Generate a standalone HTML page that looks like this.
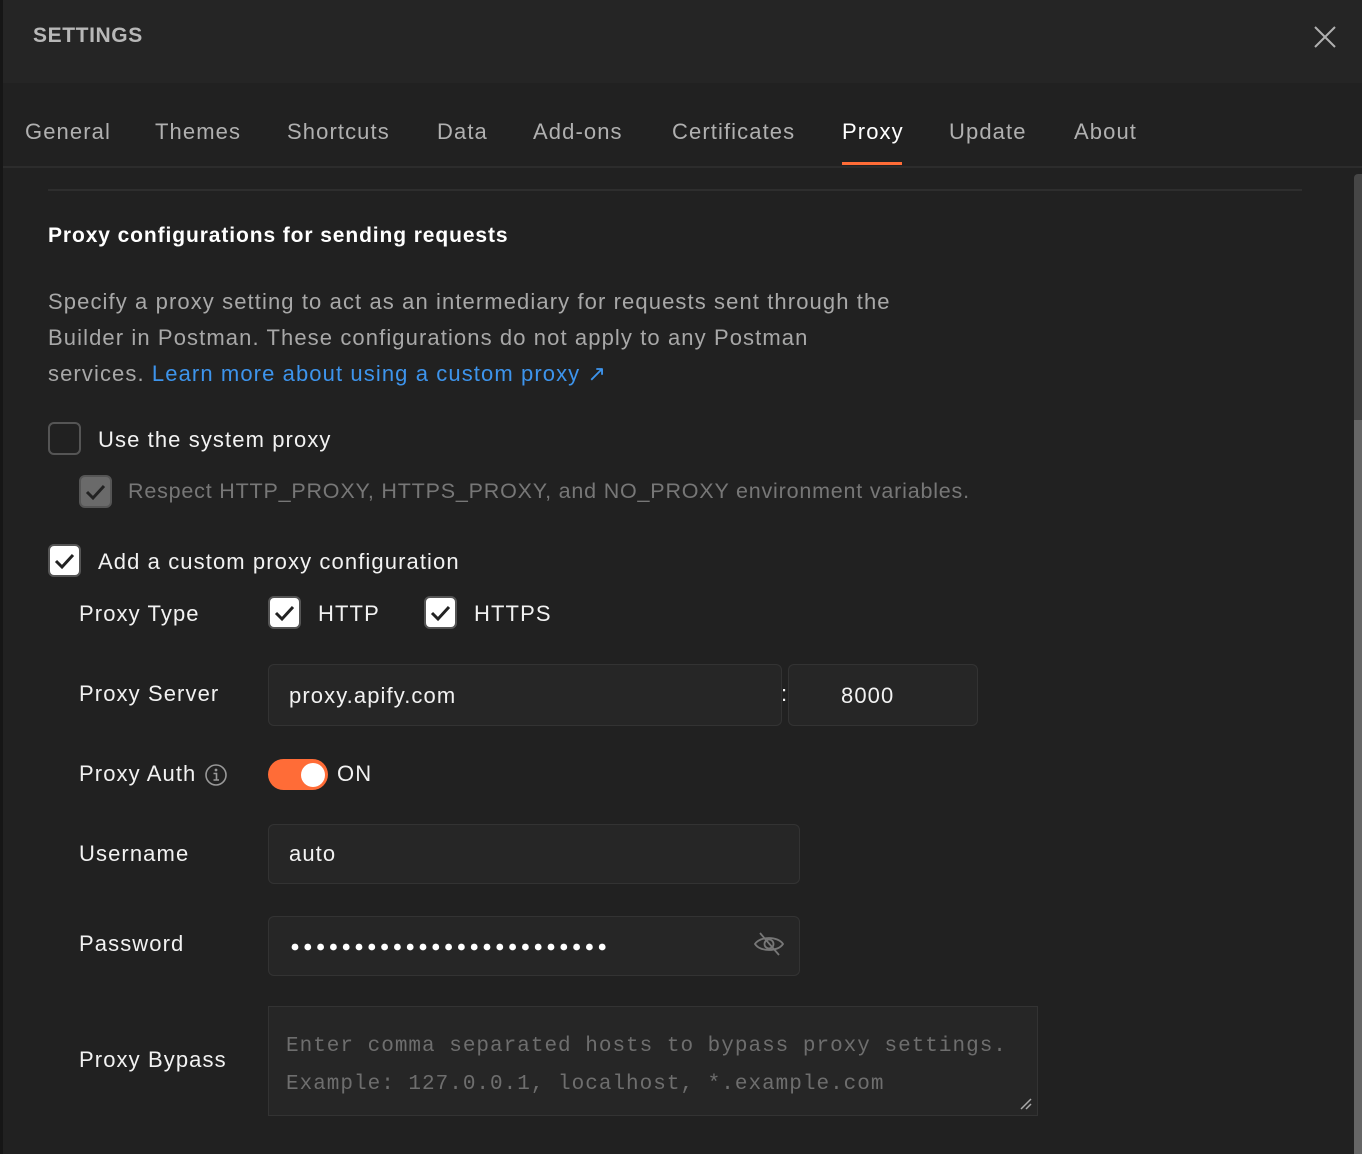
<!DOCTYPE html>
<html><head><meta charset="utf-8"><style>
*{margin:0;padding:0;box-sizing:border-box}
body{width:1362px;height:1154px;background:#212121;position:relative;overflow:hidden;font-family:"Liberation Sans",sans-serif;}
.a{position:absolute;white-space:nowrap}
.tab{position:absolute;top:118px;font-size:22px;color:#b0b0b0;line-height:28px;letter-spacing:1.1px}
.lbl{font-size:22px;color:#f2f2f2;line-height:28px;letter-spacing:1.1px}
.cb{position:absolute;width:33px;height:33px;border-radius:6px}
.cb.on{background:#fff;border:2px solid #555}
.cb svg{position:absolute;left:3px;top:3px}
.inp{position:absolute;background:#262626;border:1px solid #333;border-radius:6px}
</style></head><body>
<div class="a" style="left:0;top:0;width:1362px;height:83px;background:#252525"></div>
<div class="a" style="left:0;top:0;width:3px;height:1154px;background:#161616"></div>
<div class="a" style="left:33px;top:24px;font-size:21px;color:#b8b8b8;font-weight:bold;letter-spacing:0.6px">SETTINGS</div>
<svg class="a" style="left:1313px;top:25px" width="24" height="24"><path d="M2 2L22 22M22 2L2 22" stroke="#b0b0b0" stroke-width="2"/></svg>

<div class="tab" style="left:25px">General</div>
<div class="tab" style="left:155px">Themes</div>
<div class="tab" style="left:287px">Shortcuts</div>
<div class="tab" style="left:437px">Data</div>
<div class="tab" style="left:533px">Add-ons</div>
<div class="tab" style="left:672px">Certificates</div>
<div class="tab" style="left:842px;color:#fff">Proxy</div>
<div class="tab" style="left:949px">Update</div>
<div class="tab" style="left:1074px">About</div>
<div class="a" style="left:842px;top:162px;width:60px;height:3px;background:#ff6c37"></div>
<div class="a" style="left:3px;top:166px;width:1359px;height:2px;background:#2c2c2c"></div>
<div class="a" style="left:48px;top:189px;width:1254px;height:2px;background:#2e2e2e"></div>

<div class="a" style="left:1354px;top:174px;width:8px;height:980px;background:#464646;border-radius:4px 0 0 0"></div>
<div class="a" style="left:1354px;top:420px;width:8px;height:734px;background:#666"></div>

<div class="a" style="left:48px;top:224px;font-size:21px;font-weight:bold;color:#fff;letter-spacing:0.9px">Proxy configurations for sending requests</div>
<div class="a" style="left:48px;top:284px;font-size:22px;color:#a8a8a8;line-height:36px;letter-spacing:1.1px">Specify a proxy setting to act as an intermediary for requests sent through the<br>Builder in Postman. These configurations do not apply to any Postman<br>services. <span style="color:#3d94ec">Learn more about using a custom proxy ↗</span></div>

<div class="cb" style="left:48px;top:422px;border:2px solid #555"></div>
<div class="a lbl" style="left:98px;top:426px">Use the system proxy</div>
<div class="cb" style="left:79px;top:475px;background:#6a6a6a;border:2px solid #555"><svg width="24" height="24"><path d="M3 12L9 18L20 6" stroke="#222" stroke-width="3" fill="none"/></svg></div>
<div class="a" style="left:128px;top:479px;font-size:21.5px;color:#777;letter-spacing:0.8px">Respect HTTP_PROXY, HTTPS_PROXY, and NO_PROXY environment variables.</div>

<div class="cb on" style="left:48px;top:544px"><svg width="24" height="24"><path d="M3 12L9 18L20 6" stroke="#222" stroke-width="3" fill="none"/></svg></div>
<div class="a lbl" style="left:98px;top:548px">Add a custom proxy configuration</div>

<div class="a lbl" style="left:79px;top:600px">Proxy Type</div>
<div class="cb on" style="left:268px;top:596px"><svg width="24" height="24"><path d="M3 12L9 18L20 6" stroke="#222" stroke-width="3" fill="none"/></svg></div>
<div class="a lbl" style="left:318px;top:600px">HTTP</div>
<div class="cb on" style="left:424px;top:596px"><svg width="24" height="24"><path d="M3 12L9 18L20 6" stroke="#222" stroke-width="3" fill="none"/></svg></div>
<div class="a lbl" style="left:474px;top:600px">HTTPS</div>

<div class="a lbl" style="left:79px;top:680px">Proxy Server</div>
<div class="inp" style="left:268px;top:664px;width:514px;height:62px"></div>
<div class="a lbl" style="left:289px;top:682px">proxy.apify.com</div>
<div class="a lbl" style="left:781px;top:680px">:</div>
<div class="inp" style="left:788px;top:664px;width:190px;height:62px"></div>
<div class="a lbl" style="left:841px;top:682px">8000</div>

<div class="a lbl" style="left:79px;top:760px">Proxy Auth</div>
<svg class="a" style="left:204px;top:763px" width="24" height="24"><circle cx="12" cy="12" r="10" stroke="#999" stroke-width="1.6" fill="none"/><circle cx="12" cy="7" r="1.4" fill="#999"/><path d="M9.5 10.5H12.5V17M9.5 17H15" stroke="#999" stroke-width="1.6" fill="none"/></svg>
<div class="a" style="left:268px;top:759px;width:60px;height:31px;border-radius:16px;background:#ff6c37"></div>
<div class="a" style="left:301px;top:763px;width:24px;height:24px;border-radius:12px;background:#fff"></div>
<div class="a lbl" style="left:337px;top:760px">ON</div>

<div class="a lbl" style="left:79px;top:840px">Username</div>
<div class="inp" style="left:268px;top:824px;width:532px;height:60px"></div>
<div class="a lbl" style="left:289px;top:840px">auto</div>

<div class="a lbl" style="left:79px;top:930px">Password</div>
<div class="inp" style="left:268px;top:916px;width:532px;height:60px"></div>
<svg class="a" style="left:288px;top:940px" width="330" height="14">
<g fill="#fff">
<circle cx="7" cy="7" r="3.4"/><circle cx="19.8" cy="7" r="3.4"/><circle cx="32.6" cy="7" r="3.4"/><circle cx="45.4" cy="7" r="3.4"/><circle cx="58.2" cy="7" r="3.4"/><circle cx="71" cy="7" r="3.4"/><circle cx="83.8" cy="7" r="3.4"/><circle cx="96.6" cy="7" r="3.4"/><circle cx="109.4" cy="7" r="3.4"/><circle cx="122.2" cy="7" r="3.4"/><circle cx="135" cy="7" r="3.4"/><circle cx="147.8" cy="7" r="3.4"/><circle cx="160.6" cy="7" r="3.4"/><circle cx="173.4" cy="7" r="3.4"/><circle cx="186.2" cy="7" r="3.4"/><circle cx="199" cy="7" r="3.4"/><circle cx="211.8" cy="7" r="3.4"/><circle cx="224.6" cy="7" r="3.4"/><circle cx="237.4" cy="7" r="3.4"/><circle cx="250.2" cy="7" r="3.4"/><circle cx="263" cy="7" r="3.4"/><circle cx="275.8" cy="7" r="3.4"/><circle cx="288.6" cy="7" r="3.4"/><circle cx="301.4" cy="7" r="3.4"/><circle cx="314.2" cy="7" r="3.4"/>
</g></svg>
<svg class="a" style="left:753px;top:931px" width="32" height="26"><path d="M2 13C7 5 25 5 30 13C25 21 7 21 2 13Z" stroke="#777" stroke-width="1.8" fill="none"/><circle cx="16" cy="13" r="4.5" stroke="#777" stroke-width="1.8" fill="none"/><path d="M7 2L26 24" stroke="#777" stroke-width="1.8"/></svg>

<div class="a lbl" style="left:79px;top:1046px">Proxy Bypass</div>
<div class="a" style="left:268px;top:1006px;width:770px;height:110px;background:#262626;border:1px solid #333"></div>
<div class="a" style="left:286px;top:1028px;font-family:'Liberation Mono',monospace;font-size:21px;color:#6e6e6e;line-height:38px;letter-spacing:1px">Enter comma separated hosts to bypass proxy settings.<br>Example: 127.0.0.1, localhost, *.example.com</div>
<svg class="a" style="left:1019px;top:1097px" width="14" height="14"><path d="M2 12L12 2M7 12L12 7" stroke="#aaa" stroke-width="1.5"/></svg>
</body></html>
